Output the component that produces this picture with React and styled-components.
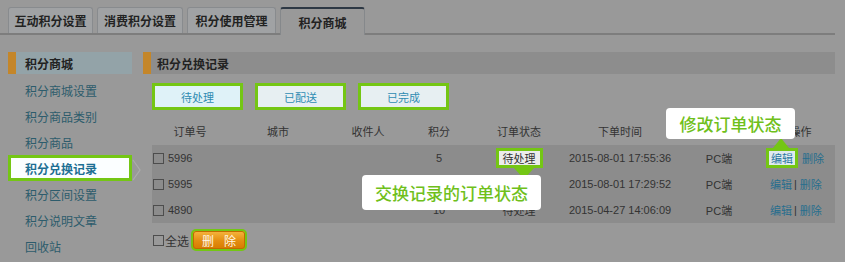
import React from "react";
import styled, { createGlobalStyle, css } from "styled-components";

const GREEN = "#74c614";
const CN = `"Liberation Sans", "Noto Sans CJK SC", sans-serif`;

const Global = createGlobalStyle`
  html, body { margin: 0; padding: 0; background: #999999; }
  body { font-family: ${CN}; color: #333; }
  * { box-sizing: border-box; }
`;

const Page = styled.div`
  position: relative;
  width: 845px;
  height: 262px;
  overflow: hidden;
  background: #999999;
`;

const TabBar = styled.div`
  display: flex;
  align-items: flex-end;
  gap: 4px;
  padding: 8px 0 0 8px;
  margin-right: 10px;
  height: 35px;
  border-bottom: 2px solid #7d7d7d;
`;

const Tab = styled.div`
  height: 26px;
  width: ${(p) => p.$w}px;
  display: flex;
  align-items: center;
  justify-content: center;
  font-size: 12px;
  font-weight: bold;
  color: #222;
  border: 1px solid #888b8e;
  border-bottom: none;
  border-radius: 3px 3px 0 0;
  background: #a0a2a4;
  ${(p) =>
    p.$active &&
    css`
      height: 28px;
      margin-bottom: -2px;
      background: #999999;
      border-color: #85888b;
      border-top: 2px solid #2d3844;
    `}
`;

const Body = styled.div`
  display: flex;
  padding-top: 17px;
`;

const Sidebar = styled.div`
  width: 124px;
  margin-left: 8px;
  display: flex;
  flex-direction: column;
`;

const SectionHead = styled.div`
  height: 22px;
  display: flex;
  align-items: center;
  font-size: 12px;
  font-weight: bold;
  color: #222;
  background: ${(p) => p.$bg};
  border-left: 8px solid #c4862a;
  padding-left: ${(p) => p.$pad}px;
  margin-bottom: ${(p) => p.$mb || 0}px;
`;

const MenuItem = styled.div`
  position: relative;
  height: 26px;
  display: flex;
  align-items: center;
  padding-left: 17px;
  font-size: 12px;
  color: #2d5c6c;
  ${(p) =>
    p.$active &&
    css`
      background: #fbfeff;
      border: 3px solid ${GREEN};
      padding-left: 14px;
      font-weight: bold;
      color: #1e6f93;
    `}
`;

const Chevron = styled.svg`
  position: absolute;
  right: -12px;
  top: 1px;
`;

const Main = styled.div`
  width: 692px;
  margin-left: 11px;
  display: flex;
  flex-direction: column;
`;

const FilterRow = styled.div`
  display: flex;
  gap: 12px;
  margin: 9px 0 8px 9px;
`;

const FilterBtn = styled.div`
  width: 91px;
  height: 27px;
  border: 3px solid ${GREEN};
  background: ${(p) => (p.$current ? "#dff2f8" : "#e7eff2")};
  color: #2f8cb2;
  font-size: 11px;
  display: flex;
  align-items: center;
  justify-content: center;
`;

const Table = styled.div`
  width: 683px;
  margin-left: 9px;
  display: grid;
  grid-template-columns: 76px 100px 80px 62px 98px 104px 94px 69px;
`;

const HeadCell = styled.div`
  height: 26px;
  display: flex;
  align-items: center;
  justify-content: center;
  font-size: 11px;
  color: #333;
`;

const Row = styled.div`
  display: contents;
`;

const Cell = styled.div`
  height: 26px;
  display: flex;
  align-items: center;
  justify-content: ${(p) => (p.$left ? "flex-start" : "center")};
  padding-left: ${(p) => p.$pl || 0}px;
  white-space: nowrap;
  font-size: 11px;
  color: #333;
  background: #8c8c8c;
  margin-top: ${(p) => (p.$first ? "1px" : "0")};
`;

const Check = styled.span`
  display: inline-block;
  flex: none;
  width: 11px;
  height: 11px;
  border: 1px solid #4d4d4d;
  margin: ${(p) => p.$m || "0 4px 0 1px"};
`;

const Highlight = styled.span`
  position: relative;
  display: inline-flex;
  align-items: center;
  justify-content: center;
  height: 20px;
  padding: 0 ${(p) => p.$px}px;
  margin-right: ${(p) => p.$mr || 0}px;
  border: 3px solid ${GREEN};
  background: ${(p) => p.$bg};
  color: ${(p) => p.$color};
  font-size: 11px;
  &::after {
    content: "";
    position: absolute;
    left: ${(p) => p.$arrowX}px;
    border-left: 8px solid transparent;
    border-right: 8px solid transparent;
    ${(p) =>
      p.$arrow === "up"
        ? css`
            top: -13px;
            border-bottom: 10px solid ${GREEN};
          `
        : css`
            bottom: -14px;
            border-top: 11px solid ${GREEN};
            border-left-width: 10px;
            border-right-width: 10px;
          `}
  }
`;

const Link = styled.span`
  color: #276e8e;
  margin-left: ${(p) => p.$ml || 0}px;
`;

const Sep = styled.span`
  color: #333;
  margin: 0 3px 0 2px;
`;

const Footer = styled.div`
  display: flex;
  align-items: center;
  margin: 6px 0 0 10px;
  font-size: 12px;
  color: #333;
  white-space: nowrap;
`;

const DelBtn = styled.div`
  width: 56px;
  height: 22px;
  margin-left: 2px;
  border: 2px solid ${GREEN};
  background: linear-gradient(#f6b640, #e38d10 55%, #d67a00);
  border-radius: 5px;
  color: #fff8e8;
  font-size: 12px;
  white-space: pre;
  display: flex;
  align-items: center;
  justify-content: center;
  box-shadow: inset 0 0 0 1px #c26a00;
`;

const Tip = styled.div`
  position: absolute;
  left: ${(p) => p.$x}px;
  top: ${(p) => p.$y}px;
  width: ${(p) => p.$w}px;
  height: ${(p) => p.$h}px;
  background: #ffffff;
  border-radius: 4px;
  color: #6fc01b;
  font-size: 17px;
  font-weight: 500;
  font-family: "Noto Sans CJK SC", sans-serif;
  display: flex;
  align-items: center;
  justify-content: center;
`;

const rows = [
  { id: "5996", pts: "5", time: "2015-08-01 17:55:36", hl: true },
  { id: "5995", pts: "", time: "2015-08-01 17:29:52" },
  { id: "4890", pts: "10", time: "2015-04-27 14:06:09" },
];

const heads = ["订单号", "城市", "收件人", "积分", "订单状态", "下单时间", "", "操作"];

export default function App() {
  return (
    <Page>
      <Global />
      <TabBar>
        <Tab $w={85}>互动积分设置</Tab>
        <Tab $w={86}>消费积分设置</Tab>
        <Tab $w={89}>积分使用管理</Tab>
        <Tab $w={85} $active>积分商城</Tab>
      </TabBar>
      <Body>
        <Sidebar>
          <SectionHead $bg="#93a3a8" $pad={9} $mb={3}>
            积分商城
          </SectionHead>
          <MenuItem>积分商城设置</MenuItem>
          <MenuItem>积分商品类别</MenuItem>
          <MenuItem>积分商品</MenuItem>
          <MenuItem $active>
            积分兑换记录
            <Chevron width="9" height="22" viewBox="0 0 9 22">
              <polyline points="1,1 8,11 1,21" fill="none" stroke="#acacac" strokeWidth="1.2" />
            </Chevron>
          </MenuItem>
          <MenuItem>积分区间设置</MenuItem>
          <MenuItem>积分说明文章</MenuItem>
          <MenuItem>回收站</MenuItem>
        </Sidebar>
        <Main>
          <SectionHead $bg="#8d8d8d" $pad={6}>积分兑换记录</SectionHead>
          <FilterRow>
            <FilterBtn $current>待处理</FilterBtn>
            <FilterBtn>已配送</FilterBtn>
            <FilterBtn>已完成</FilterBtn>
          </FilterRow>
          <Table>
            {heads.map((h, i) => (
              <HeadCell key={i}>{h}</HeadCell>
            ))}
            {rows.map((r, i) => (
              <Row key={r.id}>
                <Cell $left $first={i === 0}>
                  <Check />
                  {r.id}
                </Cell>
                <Cell $first={i === 0} />
                <Cell $first={i === 0} />
                <Cell $first={i === 0}>{r.pts}</Cell>
                <Cell $first={i === 0}>
                  {r.hl ? (
                    <Highlight $bg="#ececec" $color="#333" $px={4} $arrow="down" $arrowX={15}>
                      待处理
                    </Highlight>
                  ) : i === 2 ? (
                    "待处理"
                  ) : (
                    ""
                  )}
                </Cell>
                <Cell $first={i === 0} $left $pl={1}>
                  {r.time}
                </Cell>
                <Cell $first={i === 0}>PC端</Cell>
                <Cell $first={i === 0} $left>
                  {r.hl ? (
                    <Highlight $bg="#dfeaef" $color="#2b78a0" $px={2} $mr={4} $arrow="up" $arrowX={4}>
                      编辑
                    </Highlight>
                  ) : (
                    <>
                      <Link $ml={4}>编辑</Link>
                      <Sep>|</Sep>
                    </>
                  )}
                  <Link>删除</Link>
                </Cell>
              </Row>
            ))}
          </Table>
          <Footer>
            <Check $m="0 1px 0 0" />
            全选
            <DelBtn>{"删   除"}</DelBtn>
          </Footer>
        </Main>
      </Body>
      <Tip $x={666} $y={108} $w={129} $h={31}>修改订单状态</Tip>
      <Tip $x={362} $y={175} $w={179} $h={35}>交换记录的订单状态</Tip>
    </Page>
  );
}
